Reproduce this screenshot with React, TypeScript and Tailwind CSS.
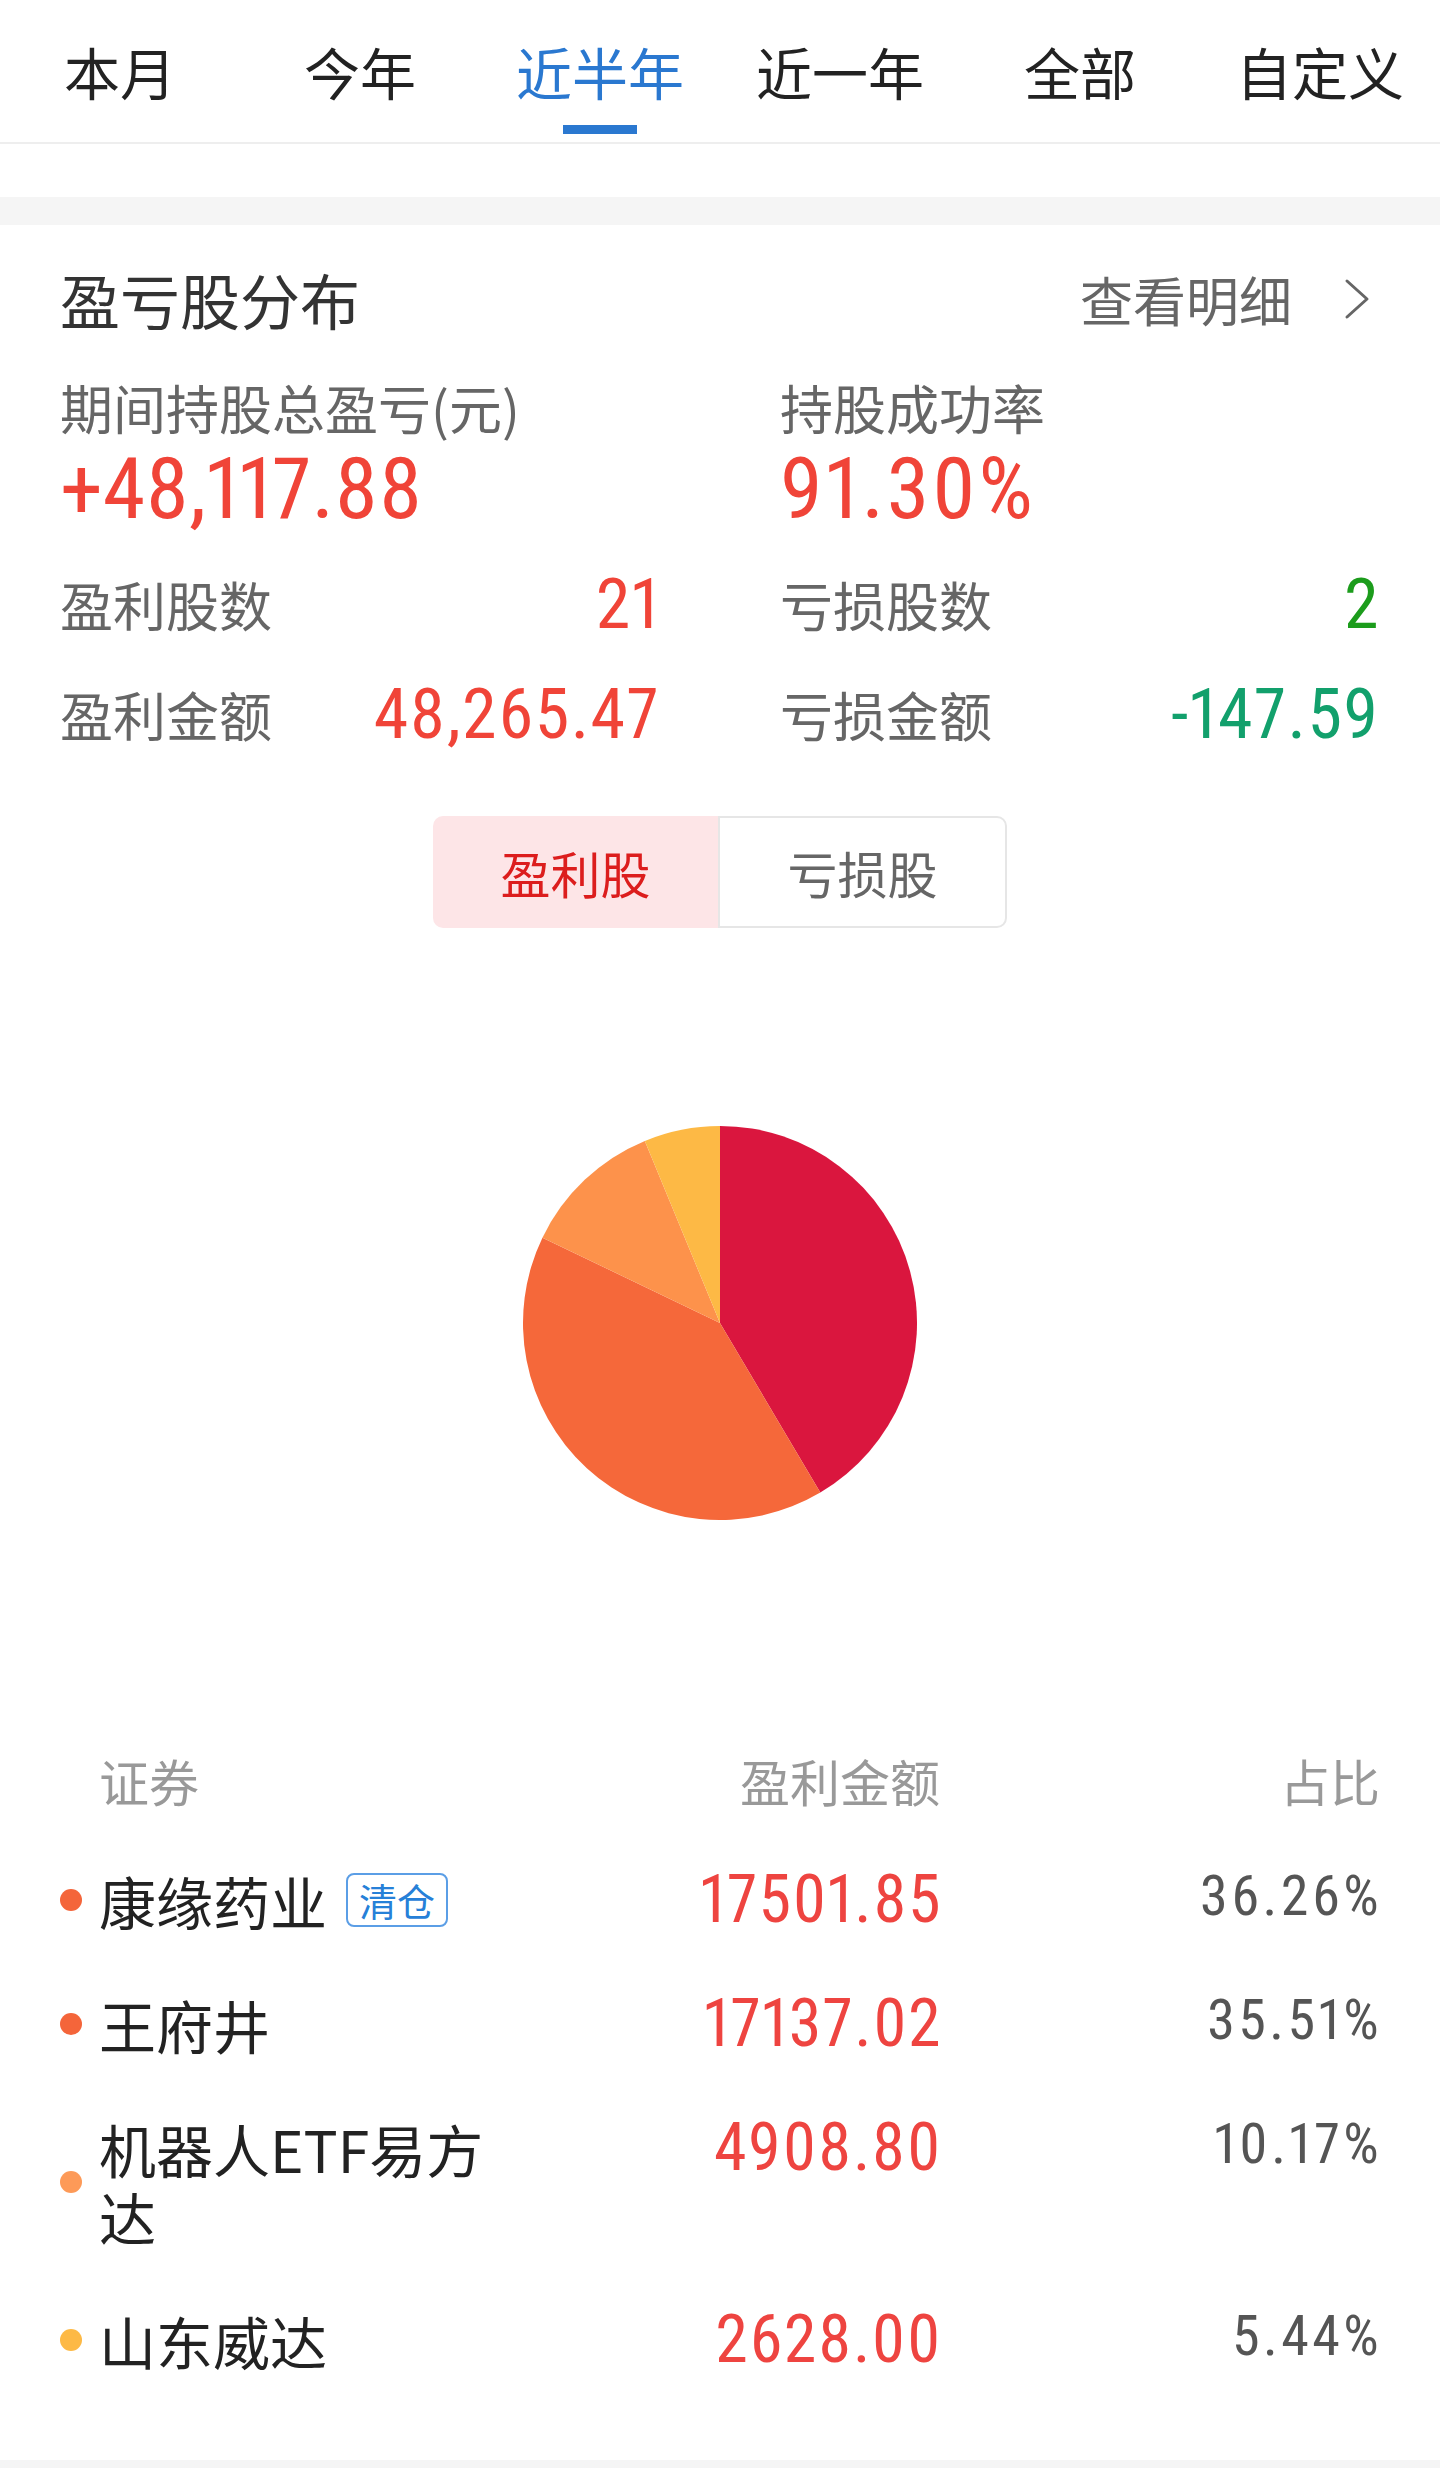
import React from "react";

const tabs = ["本月", "今年", "近半年", "近一年", "全部", "自定义"];

const stocks = [
  { name: "康缘药业", amount: "17501.85", value: 17501.85, pct: "36.26%", dot: "bg-[#f4653a]", slice: "#da163e", badge: "清仓" },
  { name: "王府井", amount: "17137.02", value: 17137.02, pct: "35.51%", dot: "bg-[#f4653a]", slice: "#f5683a" },
  { name: "机器人ETF易方达", amount: "4908.80", value: 4908.8, pct: "10.17%", dot: "bg-[#fd9a58]", slice: "#fd924b" },
  { name: "山东威达", amount: "2628.00", value: 2628, pct: "5.44%", dot: "bg-[#fdb945]", slice: "#fdb945" },
];

const num = "font-['Liberation_Sans_Narrow','Roboto_Condensed',Roboto,sans-serif] proportional-nums";

function Pie() {
  const size = 394;
  const r = size / 2;
  const total = stocks.reduce((s, x) => s + x.value, 0);
  let acc = 0;
  const point = (f: number) => {
    const a = f * Math.PI * 2;
    return `${r + r * Math.sin(a)} ${r - r * Math.cos(a)}`;
  };
  return (
    <svg width={size} height={size} viewBox={`0 0 ${size} ${size}`}>
      {stocks.map((s) => {
        const start = acc / total;
        acc += s.value;
        const end = acc / total;
        const large = end - start > 0.5 ? 1 : 0;
        const d = `M ${r} ${r} L ${point(start)} A ${r} ${r} 0 ${large} 1 ${point(end)} Z`;
        return <path key={s.name} d={d} fill={s.slice} />;
      })}
    </svg>
  );
}

function StatColumn({
  label,
  value,
  valueClass,
  rows,
}: {
  label: string;
  value: string;
  valueClass: string;
  rows: { label: string; value: string; color: string }[];
}) {
  return (
    <div className="flex flex-col">
      <p className="text-[53px] leading-[64px] text-[#666]">{label}</p>
      <p className={`${num} text-[86px] leading-[100px] text-[#f04438] ${valueClass}`}>{value}</p>
      <div className="mt-[10px]">
        {rows.map((r) => (
          <div key={r.label} className="flex h-[110px] items-center justify-between">
            <span className="text-[53px] leading-none text-[#666]">{r.label}</span>
            <span className={`${num} text-[70px] leading-none tracking-[0.02em] ${r.color}`}>{r.value}</span>
          </div>
        ))}
      </div>
    </div>
  );
}

export default function App() {
  return (
    <div className="min-h-[2476px] bg-white font-['Noto_Sans_CJK_SC','Noto_Sans',sans-serif]">
      {/* period tabs */}
      <div className="grid h-[144px] grid-cols-6 border-b-2 border-[#eeeeee]">
        {tabs.map((t) => (
          <div
            key={t}
            className={`relative flex items-center justify-center text-[56px] leading-none ${
              t === "近半年" ? "text-[#2a78d0]" : "text-[#222]"
            }`}
          >
            {t}
            {t === "近半年" && (
              <span className="absolute bottom-[8px] left-1/2 h-[9px] w-[74px] -translate-x-1/2 bg-[#2a78d0]" />
            )}
          </div>
        ))}
      </div>
      <div className="h-[53px]" />
      <div className="h-[28px] bg-[#f5f5f5]" />

      {/* distribution card */}
      <div className="px-[60px]">
        <div className="flex h-[148px] items-center justify-between">
          <h2 className="text-[60px] leading-none text-[#333]">盈亏股分布</h2>
          <div className="flex items-center">
            <span className="text-[53px] leading-none text-[#666]">查看明细</span>
            <svg className="ml-[50px] mr-[8px]" width="30" height="44" viewBox="0 0 30 44">
              <polyline points="5,4 25,22 5,40" fill="none" stroke="#666" strokeWidth="3" strokeLinecap="round" strokeLinejoin="round" />
            </svg>
          </div>
        </div>

        <div className="mt-[2px] grid grid-cols-2 gap-x-[120px]">
          <StatColumn
            label="期间持股总盈亏(元)"
            value="+48,117.88"
            valueClass="tracking-normal"
            rows={[
              { label: "盈利股数", value: "21", color: "text-[#f04438]" },
              { label: "盈利金额", value: "48,265.47", color: "text-[#f04438]" },
            ]}
          />
          <StatColumn
            label="持股成功率"
            value="91.30%"
            valueClass="tracking-[0.03em]"
            rows={[
              { label: "亏损股数", value: "2", color: "text-[#1c9c1c]" },
              { label: "亏损金额", value: "-147.59", color: "text-[#12a06c]" },
            ]}
          />
        </div>

        {/* toggle */}
        <div className="mx-auto mt-[47px] flex h-[112px] w-[574px]">
          <div className="flex flex-1 items-center justify-center rounded-l-[10px] bg-[#fde5e7] text-[50px] leading-none text-[#dc1d1d]">
            盈利股
          </div>
          <div className="flex flex-1 items-center justify-center rounded-r-[10px] border-2 border-[#e6e6e6] text-[50px] leading-none text-[#666]">
            亏损股
          </div>
        </div>

        <div className="mt-[198px] flex justify-center">
          <Pie />
        </div>

        {/* table */}
        <div className="mt-[210px] flex h-[100px] items-center text-[50px] leading-none text-[#999]">
          <span className="w-[459px] pl-[39px]">证券</span>
          <span className="flex-1 text-right">盈利金额</span>
          <span className="w-[440px] text-right">占比</span>
        </div>
        <div>
          {stocks.map((s) => (
            <div key={s.name} className="flex items-start pb-[20px] pt-[36px]">
              <div className="flex w-[459px] items-center">
                <span className={`mr-[17px] h-[22px] w-[22px] shrink-0 rounded-full ${s.dot}`} />
                <div className="flex w-[420px] items-center">
                  <span className="text-[57px] leading-[68px] text-[#222]">{s.name}</span>
                  {s.badge && (
                    <span className="ml-[19px] flex h-[54px] items-center rounded-[8px] border-2 border-[#5b9ee6] px-[11px] text-[38px] leading-none text-[#2680d8]">
                      {s.badge}
                    </span>
                  )}
                </div>
              </div>
              <span className={`${num} flex-1 text-right text-[66px] leading-[68px] tracking-[0.02em] text-[#ee4440]`}>
                {s.amount}
              </span>
              <span className={`${num} -mr-[2px] w-[440px] text-right text-[56px] leading-[60px] tracking-[0.06em] text-[#555]`}>
                {s.pct}
              </span>
            </div>
          ))}
        </div>
        <div className="h-[66px]" />
      </div>
      <div className="h-[8px] bg-[#f5f5f5]" />
    </div>
  );
}
